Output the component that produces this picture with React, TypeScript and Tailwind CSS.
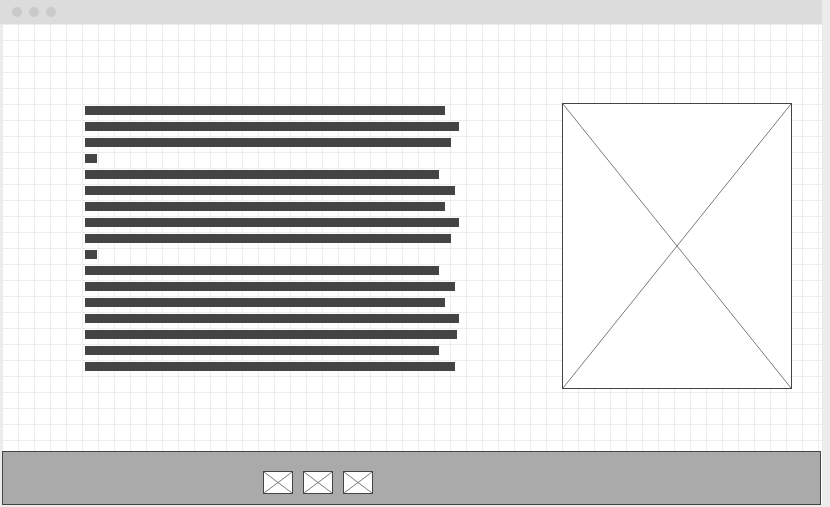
import React from 'react';

// widths of the fake text lines, top to bottom
const lines = [360, 374, 366, 12, 354, 370, 360, 374, 366, 12, 354, 370, 360, 374, 372, 354, 370];

const Placeholder = ({ className }: { className: string }) => (
  <div className={`relative border border-[#444444] bg-white ${className}`}>
    <svg className="absolute inset-0 h-full w-full" preserveAspectRatio="none" viewBox="0 0 100 100">
      <line x1="0" y1="0" x2="100" y2="100" stroke="#7a7a7a" strokeWidth="1" vectorEffect="non-scaling-stroke" />
      <line x1="100" y1="0" x2="0" y2="100" stroke="#7a7a7a" strokeWidth="1" vectorEffect="non-scaling-stroke" />
    </svg>
  </div>
);

const App = () => {
  return (
    <div className="flex h-[507px] w-[830px] flex-col overflow-hidden bg-[#ececec]">
      {/* window title bar */}
      <div className="flex h-[24px] w-[822px] shrink-0 items-center gap-[7px] bg-[#dcdcdc] pl-[12px]">
        <span className="h-[10px] w-[10px] rounded-full bg-[#cacaca]" />
        <span className="h-[10px] w-[10px] rounded-full bg-[#cacaca]" />
        <span className="h-[10px] w-[10px] rounded-full bg-[#cacaca]" />
      </div>

      {/* canvas */}
      <div className="ml-[2px] flex h-[481px] w-[820px] flex-col bg-white bg-[linear-gradient(to_right,#ececec_1px,transparent_1px),linear-gradient(to_bottom,#ececec_1px,transparent_1px)] bg-[size:16px_16px]">
        <div className="flex items-start pt-[79px]">
          <div className="ml-[83px] mt-[3px] flex w-[374px] flex-col gap-[7px]">
            {lines.map((w, i) => (
              <div key={i} className="h-[9px] bg-[#444444]" style={{ width: w }} />
            ))}
          </div>
          <Placeholder className="ml-[103px] h-[286px] w-[230px]" />
        </div>

        <div className="flex-1" />

        {/* footer */}
        <div className="flex h-[54px] w-[819px] gap-[10px] border border-[#444444] bg-[#aaaaaa] pl-[260px] pt-[19px]">
          <Placeholder className="h-[23px] w-[30px]" />
          <Placeholder className="h-[23px] w-[30px]" />
          <Placeholder className="h-[23px] w-[30px]" />
        </div>
      </div>
    </div>
  );
};

export default App;
